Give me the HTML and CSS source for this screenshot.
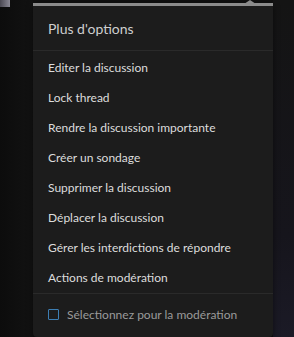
FILE: index.html
```html
<!DOCTYPE html>
<html lang="fr">
<head>
<meta charset="UTF-8">
<title>Plus d'options</title>
<link rel="stylesheet" href="styles.css">
</head>
<body>
<div class="page">
  <div class="side_left"><div class="thumb"></div></div>
  <div class="menu">
    <div class="arrow"></div>
    <div class="menu_head">Plus d'options</div>
    <ul class="menu_list">
      <li>Editer la discussion</li>
      <li>Lock thread</li>
      <li>Rendre la discussion importante</li>
      <li>Créer un sondage</li>
      <li>Supprimer la discussion</li>
      <li>Déplacer la discussion</li>
      <li>Gérer les interdictions de répondre</li>
      <li>Actions de modération</li>
    </ul>
    <label class="menu_foot">
      <span class="check"></span>
      <span>Sélectionnez pour la modération</span>
    </label>
  </div>
  <div class="side_right"></div>
</div>
</body>
</html>
```

FILE: styles.css
```css
* {
  margin: 0;
  padding: 0;
  box-sizing: border-box;
}
html, body {
  width: 294px;
  height: 337px;
  overflow: hidden;
}
body {
  background-color: #101010;
  font-family: Lato, "Open Sans", sans-serif;
}
li {
  list-style-type: none;
}
.page {
  display: flex;
  height: 337px;
}
.side_left {
  width: 33px;
  background: linear-gradient(to right, #0c0c0c, #121212);
}
.thumb {
  width: 10px;
  height: 7px;
  background: linear-gradient(to right, #4a4852, #8a8894);
}
.side_right {
  flex: 1;
  background: linear-gradient(to bottom, #141414, #16151c 70%, #1b1a26);
}
.menu {
  position: relative;
  width: 240px;
  height: 334px;
  margin-top: 3px;
  background-color: #1c1c1c;
  border-top: 3px solid #8b8b8b;
  border-radius: 0 0 4px 4px;
  box-shadow: 0 2px 6px rgba(0, 0, 0, .5);
  display: flex;
  flex-direction: column;
}
.arrow {
  position: absolute;
  top: -6px;
  left: 211px;
  width: 0;
  height: 0;
  border-left: 6px solid transparent;
  border-right: 6px solid transparent;
  border-bottom: 4px solid #8b8b8b;
}
.menu_head {
  height: 45px;
  padding: 0 15px;
  display: flex;
  align-items: center;
  font-size: 14px;
  color: #cfcfcf;
  border-bottom: 1px solid #2a2a2a;
}
.menu_list {
  padding-top: 2px;
  border-bottom: 1px solid #2a2a2a;
}
.menu_list li {
  height: 30px;
  line-height: 30px;
  padding: 0 15px;
  font-size: 12px;
  color: #dcdcdc;
}
.menu_foot {
  flex: 1;
  display: flex;
  align-items: center;
  gap: 8px;
  padding: 0 15px 2px;
  font-size: 12px;
  color: #9a9a9a;
}
.check {
  width: 11px;
  height: 11px;
  border: 1.5px solid #3d7eb3;
  border-radius: 1px;
}
```
